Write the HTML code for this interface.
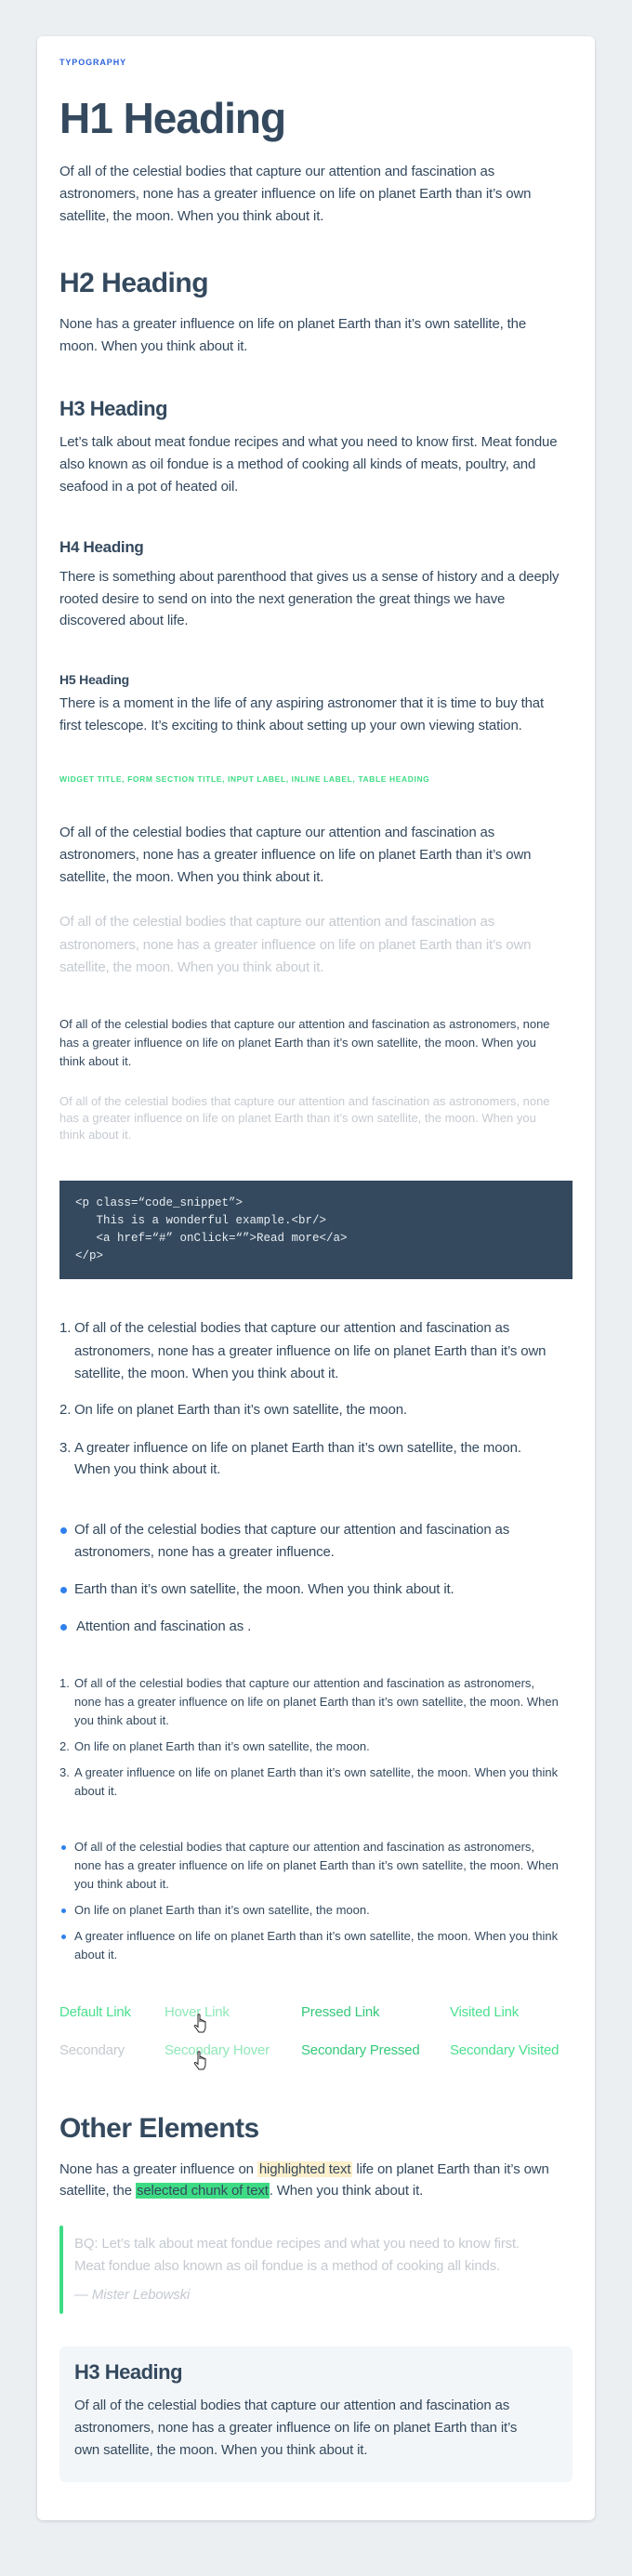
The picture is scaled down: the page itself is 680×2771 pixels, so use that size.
<!DOCTYPE html>
<html><head><meta charset="utf-8"><style>
*{margin:0;padding:0;box-sizing:border-box}
body{width:680px;height:2771px;background:#eceff2;font-family:"Liberation Sans",sans-serif;color:#34495e;position:relative;overflow:hidden}
.card{position:absolute;left:40px;top:39px;width:600px;height:2672px;background:#fff;border-radius:6px;box-shadow:0 1px 3px rgba(40,50,70,.18)}
.a{position:absolute;left:64px;white-space:nowrap}
.l{height:24px;line-height:24px;font-size:15px;letter-spacing:-0.15px}
.s{height:20px;line-height:20px;font-size:13px;letter-spacing:0px}
.h{font-weight:bold;line-height:1;letter-spacing:-0.5px}
.lt{color:#c5cad0}
.in{left:80px}
.num{position:absolute;left:64px;white-space:nowrap}
.dot{position:absolute;left:65px;width:7px;height:7px;border-radius:50%;background:#2f80ed}
.sdot{position:absolute;left:66px;width:5px;height:5px;border-radius:50%;background:#2f80ed}
.code{position:absolute;left:64px;top:1270px;width:552px;height:106px;background:#34495e}
.cl{position:absolute;left:81px;font-family:"Liberation Mono",monospace;font-size:12.5px;color:#e8edf2;white-space:pre;height:19px;line-height:19px}
.lk{position:absolute;font-size:15px;height:22px;line-height:22px;white-space:nowrap;letter-spacing:-0.2px}
</style></head><body>
<div class="card"></div>

<div class="a" style="top:61px;font-size:9px;font-weight:bold;color:#2b63d9;letter-spacing:0.9px;line-height:12px">TYPOGRAPHY</div>

<div class="a h" style="top:104px;font-size:46px;letter-spacing:-1px">H1 Heading</div>
<div class="a l" style="top:173px">Of all of the celestial bodies that capture our attention and fascination as</div>
<div class="a l" style="top:197px">astronomers, none has a greater influence on life on planet Earth than it’s own</div>
<div class="a l" style="top:221px">satellite, the moon. When you think about it.</div>

<div class="a h" style="top:290px;font-size:30px">H2 Heading</div>
<div class="a l" style="top:337px">None has a greater influence on life on planet Earth than it’s own satellite, the</div>
<div class="a l" style="top:361px">moon. When you think about it.</div>

<div class="a h" style="top:429px;font-size:22px">H3 Heading</div>
<div class="a l" style="top:464px">Let’s talk about meat fondue recipes and what you need to know first. Meat fondue</div>
<div class="a l" style="top:488px">also known as oil fondue is a method of cooking all kinds of meats, poultry, and</div>
<div class="a l" style="top:512px">seafood in a pot of heated oil.</div>

<div class="a h" style="top:580px;font-size:17px;letter-spacing:-0.3px">H4 Heading</div>
<div class="a l" style="top:609px">There is something about parenthood that gives us a sense of history and a deeply</div>
<div class="a l" style="top:633px">rooted desire to send on into the next generation the great things we have</div>
<div class="a l" style="top:656px">discovered about life.</div>

<div class="a h" style="top:724px;font-size:14px;letter-spacing:-0.2px">H5 Heading</div>
<div class="a l" style="top:745px">There is a moment in the life of any aspiring astronomer that it is time to buy that</div>
<div class="a l" style="top:769px">first telescope. It’s exciting to think about setting up your own viewing station.</div>

<div class="a" style="top:832px;font-size:8.5px;font-weight:bold;color:#3ddc84;letter-spacing:0.6px;line-height:12px">WIDGET TITLE, FORM SECTION TITLE, INPUT LABEL, INLINE LABEL, TABLE HEADING</div>

<div class="a l" style="top:884px">Of all of the celestial bodies that capture our attention and fascination as</div>
<div class="a l" style="top:908px">astronomers, none has a greater influence on life on planet Earth than it’s own</div>
<div class="a l" style="top:932px">satellite, the moon. When you think about it.</div>

<div class="a l lt" style="top:980px">Of all of the celestial bodies that capture our attention and fascination as</div>
<div class="a l lt" style="top:1005px">astronomers, none has a greater influence on life on planet Earth than it’s own</div>
<div class="a l lt" style="top:1029px">satellite, the moon. When you think about it.</div>

<div class="a s" style="top:1092px">Of all of the celestial bodies that capture our attention and fascination as astronomers, none</div>
<div class="a s" style="top:1112px">has a greater influence on life on planet Earth than it’s own satellite, the moon. When you</div>
<div class="a s" style="top:1132px">think about it.</div>

<div class="a s lt" style="top:1176px;height:18px;line-height:18px">Of all of the celestial bodies that capture our attention and fascination as astronomers, none</div>
<div class="a s lt" style="top:1194px;height:18px;line-height:18px">has a greater influence on life on planet Earth than it’s own satellite, the moon. When you</div>
<div class="a s lt" style="top:1212px;height:18px;line-height:18px">think about it.</div>

<div class="code"></div>
<div class="cl" style="top:1285px">&lt;p class=“code_snippet”&gt;</div>
<div class="cl" style="top:1304px">   This is a wonderful example.&lt;br/&gt;</div>
<div class="cl" style="top:1323px">   &lt;a href=“#” onClick=“”&gt;Read more&lt;/a&gt;</div>
<div class="cl" style="top:1342px">&lt;/p&gt;</div>

<div class="num l" style="top:1417px">1.</div>
<div class="a l in" style="top:1417px">Of all of the celestial bodies that capture our attention and fascination as</div>
<div class="a l in" style="top:1442px">astronomers, none has a greater influence on life on planet Earth than it’s own</div>
<div class="a l in" style="top:1466px">satellite, the moon. When you think about it.</div>
<div class="num l" style="top:1505px">2.</div>
<div class="a l in" style="top:1505px">On life on planet Earth than it’s own satellite, the moon.</div>
<div class="num l" style="top:1546px">3.</div>
<div class="a l in" style="top:1546px">A greater influence on life on planet Earth than it’s own satellite, the moon.</div>
<div class="a l in" style="top:1569px">When you think about it.</div>

<div class="dot" style="top:1643px"></div>
<div class="a l in" style="top:1634px">Of all of the celestial bodies that capture our attention and fascination as</div>
<div class="a l in" style="top:1658px">astronomers, none has a greater influence.</div>
<div class="dot" style="top:1707px"></div>
<div class="a l in" style="top:1698px">Earth than it’s own satellite, the moon. When you think about it.</div>
<div class="dot" style="top:1747px"></div>
<div class="a l in" style="top:1738px;left:82px">Attention and fascination as .</div>

<div class="num s" style="top:1801px">1.</div>
<div class="a s in" style="top:1801px">Of all of the celestial bodies that capture our attention and fascination as astronomers,</div>
<div class="a s in" style="top:1821px">none has a greater influence on life on planet Earth than it’s own satellite, the moon. When</div>
<div class="a s in" style="top:1841px">you think about it.</div>
<div class="num s" style="top:1869px">2.</div>
<div class="a s in" style="top:1869px">On life on planet Earth than it’s own satellite, the moon.</div>
<div class="num s" style="top:1897px">3.</div>
<div class="a s in" style="top:1897px">A greater influence on life on planet Earth than it’s own satellite, the moon. When you think</div>
<div class="a s in" style="top:1917px">about it.</div>

<div class="sdot" style="top:1985px"></div>
<div class="a s in" style="top:1977px">Of all of the celestial bodies that capture our attention and fascination as astronomers,</div>
<div class="a s in" style="top:1997px">none has a greater influence on life on planet Earth than it’s own satellite, the moon. When</div>
<div class="a s in" style="top:2017px">you think about it.</div>
<div class="sdot" style="top:2053px"></div>
<div class="a s in" style="top:2045px">On life on planet Earth than it’s own satellite, the moon.</div>
<div class="sdot" style="top:2081px"></div>
<div class="a s in" style="top:2073px">A greater influence on life on planet Earth than it’s own satellite, the moon. When you think</div>
<div class="a s in" style="top:2093px">about it.</div>

<div class="lk" style="left:64px;top:2154px;color:#4be08f">Default Link</div>
<div class="lk" style="left:177px;top:2154px;color:#8fe9b8">Hover Link</div>
<div class="lk" style="left:324px;top:2154px;color:#35c97a">Pressed Link</div>
<div class="lk" style="left:484px;top:2154px;color:#4be08f">Visited Link</div>
<div class="lk" style="left:64px;top:2195px;color:#c5cad0">Secondary</div>
<div class="lk" style="left:177px;top:2195px;color:#8fe9b8">Secondary Hover</div>
<div class="lk" style="left:324px;top:2195px;color:#35c97a">Secondary Pressed</div>
<div class="lk" style="left:484px;top:2195px;color:#4be08f">Secondary Visited</div>

<svg style="position:absolute;left:207px;top:2166px" width="20" height="22" viewBox="0 0 20 22"><path d="M6 1.5c0-1 2-1 2 0V9V7c0-1 2-1 2 0v2-1c0-1 2-1 2 0v1.5-.5c0-1 2-1 2 0V15c0 2-1 3.5-2 5H7c-1-1.5-3-4-4.5-6-.7-1 .5-2 1.5-1.2L6 14.5z" fill="#fff" stroke="#222" stroke-width="1"/></svg>
<svg style="position:absolute;left:207px;top:2206px" width="20" height="22" viewBox="0 0 20 22"><path d="M6 1.5c0-1 2-1 2 0V9V7c0-1 2-1 2 0v2-1c0-1 2-1 2 0v1.5-.5c0-1 2-1 2 0V15c0 2-1 3.5-2 5H7c-1-1.5-3-4-4.5-6-.7-1 .5-2 1.5-1.2L6 14.5z" fill="#fff" stroke="#222" stroke-width="1"/></svg>

<div class="a h" style="top:2275px;font-size:30px">Other Elements</div>
<div class="a l" style="top:2322px">None has a greater influence on <span style="background:#fdf0cc;padding:0 2px">highlighted text</span> life on planet Earth than it’s own</div>
<div class="a l" style="top:2345px">satellite, the <span style="background:#3ddc84;padding:0 1px">selected chunk of text</span>. When you think about it.</div>

<div style="position:absolute;left:64px;top:2394px;width:4px;height:95px;background:#3ddc84;border-radius:2px"></div>
<div class="a l lt in" style="top:2402px">BQ: Let’s talk about meat fondue recipes and what you need to know first.</div>
<div class="a l lt in" style="top:2426px">Meat fondue also known as oil fondue is a method of cooking all kinds.</div>
<div class="a l lt in" style="top:2457px;font-style:italic">— Mister Lebowski</div>

<div style="position:absolute;left:64px;top:2524px;width:552px;height:146px;background:#f3f6f8;border-radius:6px"></div>
<div class="a h in" style="top:2541px;font-size:22px">H3 Heading</div>
<div class="a l in" style="top:2576px">Of all of the celestial bodies that capture our attention and fascination as</div>
<div class="a l in" style="top:2600px">astronomers, none has a greater influence on life on planet Earth than it’s</div>
<div class="a l in" style="top:2624px">own satellite, the moon. When you think about it.</div>
</body></html>
